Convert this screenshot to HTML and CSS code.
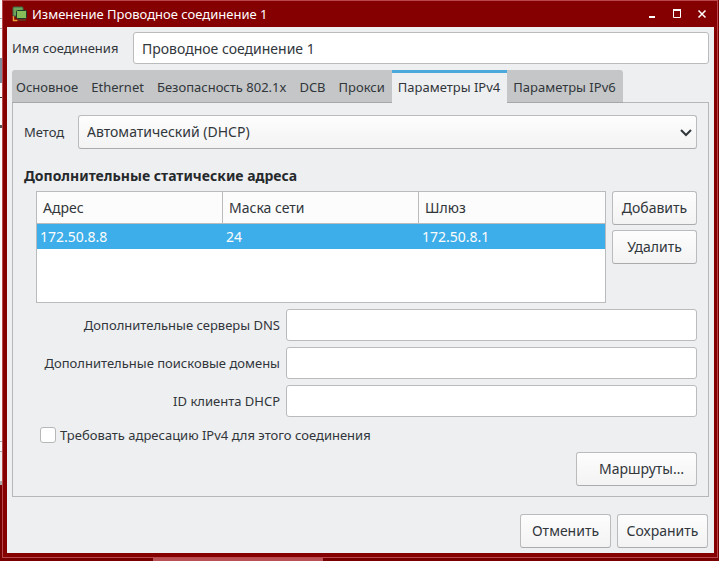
FILE: index.html
```html
<!DOCTYPE html>
<html lang="ru">
<head>
<meta charset="utf-8">
<title>Изменение Проводное соединение 1</title>
<link rel="stylesheet" href="styles.css">
</head>
<body>
<div class="desktop" aria-hidden="true"></div>
<main class="window">
  <header class="titlebar">
    <svg class="app-icon" width="16" height="16" viewBox="0 0 16 16" aria-hidden="true">
      <path d="M1.500 10v4.500h4" fill="none" stroke="#e8a33a" stroke-width="1.500"/>
      <rect x="1" y="1" width="10" height="9" rx="1" fill="#6fa35c" stroke="#3d6b48"/>
      <rect x="4.500" y="4.500" width="10" height="8" rx="1" fill="#86bd58" stroke="#1e3a2a"/>
      <path d="M6 14h8" stroke="#4a5f35" stroke-width="1"/>
    </svg>
    <h1 class="title">Изменение Проводное соединение 1</h1>
    <div class="controls">
      <button type="button" class="control" aria-label="Свернуть"><svg width="10" height="10" viewBox="0 0 10 10"><path d="M2 8h6" stroke="#fff" stroke-width="2"/></svg></button>
      <button type="button" class="control" aria-label="Развернуть"><svg width="10" height="10" viewBox="0 0 10 10"><path d="M1.500 1v7.500h7V1" fill="none" stroke="#fff"/><path d="M1 1h8" stroke="#fff" stroke-width="2"/></svg></button>
      <button type="button" class="control" aria-label="Закрыть"><svg width="10" height="10" viewBox="0 0 10 10"><path d="M1.500 1.500l7 7M8.500 1.500l-7 7" stroke="#fff" stroke-width="1.500"/></svg></button>
    </div>
  </header>
  <form class="content">
    <div class="name-row">
      <label class="name-label" for="name">Имя соединения</label>
      <input class="field" id="name" type="text" value="Проводное соединение 1">
    </div>
    <div class="tabs" role="tablist">
      <button type="button" role="tab" class="tab">Основное</button>
      <button type="button" role="tab" class="tab">Ethernet</button>
      <button type="button" role="tab" class="tab">Безопасность 802.1x</button>
      <button type="button" role="tab" class="tab">DCB</button>
      <button type="button" role="tab" class="tab">Прокси</button>
      <button type="button" role="tab" class="tab active" aria-selected="true">Параметры IPv4</button>
      <button type="button" role="tab" class="tab">Параметры IPv6</button>
    </div>
    <section class="panel" role="tabpanel">
      <div class="method-row">
        <label class="method-label" for="method">Метод</label>
        <div class="select-wrap">
          <select class="select" id="method"><option>Автоматический (DHCP)</option></select>
          <svg class="chevron" width="12" height="8" viewBox="0 0 12 8" aria-hidden="true"><path d="M1 1l5 5 5-5" fill="none" stroke="#31363b" stroke-width="2"/></svg>
        </div>
      </div>
      <h2 class="heading">Дополнительные статические адреса</h2>
      <div class="section">
        <div class="addresses">
          <div class="table-box">
            <table class="table">
              <colgroup><col class="col-address"><col class="col-mask"><col></colgroup>
              <thead><tr><th>Адрес</th><th>Маска сети</th><th>Шлюз</th></tr></thead>
              <tbody><tr><td>172.50.8.8</td><td>24</td><td>172.50.8.1</td></tr></tbody>
            </table>
          </div>
          <div class="table-actions">
            <button type="button" class="button">Добавить</button>
            <button type="button" class="button">Удалить</button>
          </div>
        </div>
        <div class="fields">
          <label for="dns">Дополнительные серверы DNS</label>
          <input class="field" id="dns" type="text">
          <label for="domains">Дополнительные поисковые домены</label>
          <input class="field" id="domains" type="text">
          <label for="client">ID клиента DHCP</label>
          <input class="field" id="client" type="text">
        </div>
        <label class="check"><input class="checkbox" type="checkbox">Требовать адресацию IPv4 для этого соединения</label>
        <div class="routes-row"><button type="button" class="button routes">Маршруты…</button></div>
      </div>
    </section>
    <footer class="footer">
      <button type="button" class="button">Отменить</button>
      <button type="button" class="button">Сохранить</button>
    </footer>
  </form>
</main>
</body>
</html>
```
FILE: styles.css
```css
* { box-sizing: border-box; }

body {
  margin: 0;
  min-height: 100vh;
  padding: 0 1px 3px 2px;
  background: #780000;
  color: #31363b;
  font: 14px/20px "Noto Sans", sans-serif;
}

input, select, button { font: inherit; color: inherit; }
label { font-size: 13px; }

.desktop {
  position: absolute;
  inset: 0;
  z-index: -1;
  background:
    linear-gradient(#b85055, #b85055) 153px 100% / 170px 3px no-repeat,
    linear-gradient(#fafafa 0 18px, #aaa 18px 19px, #fafafa 19px 28px, #aaa 28px 29px, #fafafa 29px 58px, #7c8a99 58px 83px, #fafafa 83px 97px, #333 97px 98px, #fafafa 98px 125px, #555 125px 128px, #fafafa 128px 441px, #aaa 441px 442px, #fafafa 442px 451px, #aaa 451px 452px, #eeeff1 452px 481px, #aaa 481px 485px, #780000 485px) 0 0 / 3px 100% no-repeat;
}

.window {
  border: 1px solid #b8484c;
  background: #850000;
  padding: 0 3px 4px 4px;
}

.titlebar {
  display: flex;
  align-items: center;
  height: 26px;
  padding: 0 2px 0 5px;
  gap: 4px;
  color: #fff;
}

.title { margin: 0; font-size: 13px; font-weight: 400; }
.controls { display: flex; margin-left: auto; gap: 5px; }
.control { display: flex; align-items: center; justify-content: center; width: 20px; height: 20px; padding: 0; border: 0; background: none; }

.content { padding: 5px; background: #eeeff1; }

.name-row { display: flex; align-items: center; gap: 12px; }
.name-row .field { flex: 1; }
.name-label { min-width: 109px; }

.field {
  min-width: 0;
  height: 32px;
  padding: 0 8px;
  border: 1px solid #b9bbbd;
  border-radius: 3px;
  background: #fff;
}

.tabs { display: flex; position: relative; z-index: 1; margin-top: 6px; }

.tab {
  height: 33px;
  padding: 2px 7px 0 6px;
  border: 0;
  border-bottom: 1px solid #a5a7a8;
  background: #c4c6c7;
  font-size: 13px;
  white-space: nowrap;
}
.tab:first-child { padding-left: 4px; border-top-left-radius: 3px; }
.tab:last-child { border-top-right-radius: 3px; }
.tab.active { padding-top: 0; padding-bottom: 2px; border-top: 3px solid #4aa8dd; border-bottom: 0; background: #eeeff1; }

.panel { margin-top: -1px; padding: 12px 11px 10px; border: 1px solid #b5b7b9; }

.method-row { display: flex; align-items: center; gap: 12px; }
.method-label { min-width: 42px; }
.select-wrap { display: flex; position: relative; flex: 1; }

.select, .button {
  height: 34px;
  border: 1px solid #b9bbbd;
  border-bottom-color: #a9abad;
  border-radius: 3px;
  background: linear-gradient(#fdfdfd, #f3f3f4);
}
.select { appearance: none; width: 100%; padding: 0 8px; }
.chevron { position: absolute; right: 5px; top: 14px; pointer-events: none; }

.heading { margin: 17px 0 5px; font-size: 14px; line-height: 20px; font-weight: 700; color: #26292c; }
.section { padding-left: 12px; }
.addresses { display: flex; gap: 6px; }
.table-box { flex: 1; height: 112px; border: 1px solid #b9bbbd; background: #fff; }
.table { width: 100%; table-layout: fixed; border-collapse: separate; border-spacing: 0; }
.col-address { width: 186px; }
.col-mask { width: 196px; }
.table th {
  height: 32px;
  padding: 0 6px;
  border-right: 1px solid #b9bbbd;
  border-bottom: 1px solid #b9bbbd;
  background: #fcfcfc;
  text-align: left;
  font-weight: 400;
}
.table th:last-child { border-right: 0; }
.table td { height: 25px; padding: 0 3px; background: #3daee9; color: #fcfcfc; }

.table-actions { display: flex; flex-direction: column; gap: 5px; }
.button { padding: 0 8px; }
.table-actions .button { min-width: 85px; }

.fields { display: grid; grid-template-columns: minmax(244px, auto) 1fr; gap: 6px; align-items: center; margin-top: 6px; }
.fields label { text-align: right; }

.check { display: flex; align-items: center; gap: 4px; margin-top: 8px; padding-left: 4px; }
.checkbox { appearance: none; width: 16px; height: 16px; margin: 0; border: 1px solid #b5b7b9; border-radius: 3px; background: #fff; }

.routes-row { display: flex; justify-content: flex-end; margin-top: 7px; }
.routes { padding: 0 12px 0 22px; }

.footer { display: flex; justify-content: flex-end; gap: 6px; padding: 17px 1px 0; }
.footer .button { min-width: 91px; }
```
